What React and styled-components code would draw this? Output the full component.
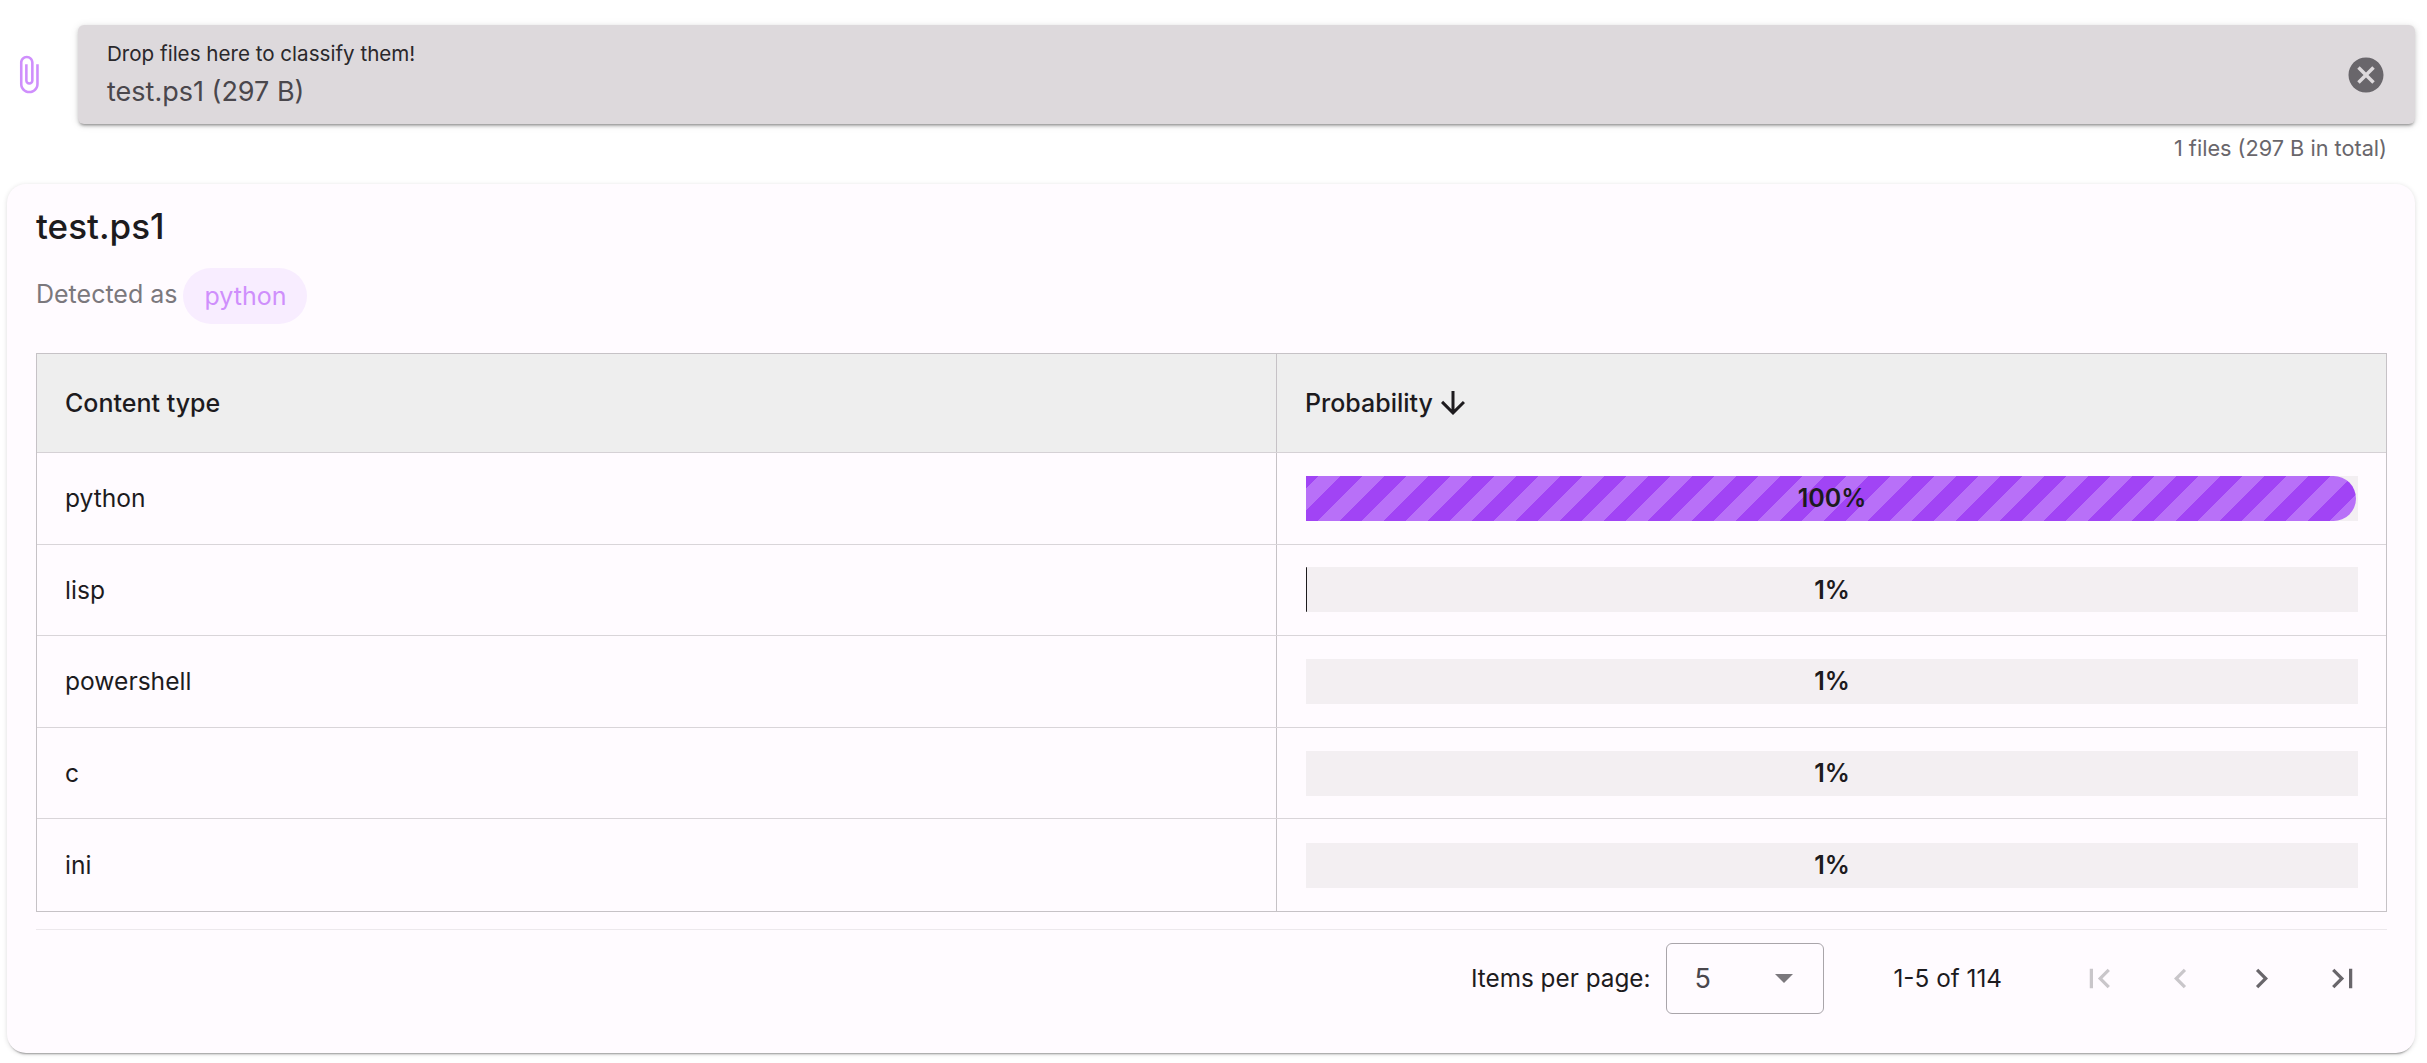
import styled, { createGlobalStyle } from 'styled-components';

const rows = [
  { name: 'python', value: 100, fill: 99.8 },
  { name: 'lisp', value: 1, fill: 0.1 },
  { name: 'powershell', value: 1, fill: 0 },
  { name: 'c', value: 1, fill: 0 },
  { name: 'ini', value: 1, fill: 0 },
];

const Icon = ({ d, size = 39, color = 'currentColor' }) => (
  <svg width={size} height={size} viewBox="0 0 24 24" fill={color} style={{ display: 'block' }}>
    <path d={d} />
  </svg>
);

const paths = {
  clip: 'M16.5 6v11.5c0 2.21-1.79 4-4 4s-4-1.79-4-4V5c0-1.38 1.12-2.5 2.5-2.5s2.5 1.12 2.5 2.5v10.5c0 .55-.45 1-1 1s-1-.45-1-1V6H10v9.5c0 1.38 1.12 2.5 2.5 2.5s2.5-1.12 2.5-2.5V5c0-2.21-1.79-4-4-4S7 2.79 7 5v12.5c0 3.04 2.46 5.5 5.5 5.5s5.5-2.46 5.5-5.5V6h-1.5z',
  cancel: 'M12 2C6.47 2 2 6.47 2 12s4.47 10 10 10 10-4.47 10-10S17.53 2 12 2zm5 13.59L15.59 17 12 13.41 8.41 17 7 15.59 10.59 12 7 8.41 8.41 7 12 10.59 15.59 7 17 8.41 13.41 12 17 15.59z',
  down: 'M20 12l-1.41-1.41L13 16.17V4h-2v12.17l-5.58-5.59L4 12l8 8 8-8z',
  first: 'M18.41 16.59L13.82 12l4.59-4.59L17 6l-6 6 6 6zM6 6h2v12H6z',
  prev: 'M15.41 7.41L14 6l-6 6 6 6 1.41-1.41L10.83 12z',
  next: 'M10 6L8.59 7.41 13.17 12l-4.58 4.59L10 18l6-6z',
  last: 'M5.59 7.41L10.18 12l-4.59 4.59L7 18l6-6-6-6zM16 6h2v12h-2z',
};

const App = () => (
  <>
    <GlobalStyle />
    <Page>
      <UploadRow>
        <ClipSlot>
          <Icon d={paths.clip} size={41} color="#cf8ffc" />
        </ClipSlot>
        <DropZone>
          <DropText>
            <DropLabel>Drop files here to classify them!</DropLabel>
            <FileName>test.ps1 (297 B)</FileName>
          </DropText>
          <Icon d={paths.cancel} size={42} color="#69666b" />
        </DropZone>
      </UploadRow>
      <TotalHint>1 files (297 B in total)</TotalHint>

      <Card>
        <Title>test.ps1</Title>
        <DetectedRow>
          Detected as <Chip>python</Chip>
        </DetectedRow>

        <Table>
          <HeadRow>
            <HeadCell>Content type</HeadCell>
            <HeadCell $divider>
              Probability
              <Icon d={paths.down} size={36} color="#1d1b1e" />
            </HeadCell>
          </HeadRow>
          {rows.map((row) => (
            <BodyRow key={row.name}>
              <BodyCell>{row.name}</BodyCell>
              <BodyCell $divider>
                <Track>
                  <Fill $full={row.value === 100} style={{ width: `${row.fill}%` }} />
                  <Percent>{row.value}%</Percent>
                </Track>
              </BodyCell>
            </BodyRow>
          ))}
        </Table>

        <Paginator>
          <PagerLabel>Items per page:</PagerLabel>
          <Select>
            5
            <Caret />
          </Select>
          <RangeLabel>1-5 of 114</RangeLabel>
          <PagerButton $disabled><Icon d={paths.first} /></PagerButton>
          <PagerButton $disabled><Icon d={paths.prev} /></PagerButton>
          <PagerButton><Icon d={paths.next} /></PagerButton>
          <PagerButton><Icon d={paths.last} /></PagerButton>
        </Paginator>
      </Card>
    </Page>
  </>
);

const GlobalStyle = createGlobalStyle`
  html, body {
    margin: 0;
    padding: 0;
    background: #ffffff;
    overflow: hidden;
  }
  body {
    font-family: 'Inter', 'Roboto', sans-serif;
    color: #1d1b1e;
  }
`;

const Page = styled.div`
  width: 2427px;
  height: 1063px;
  box-sizing: border-box;
  padding: 25px 12px 0 7px;
`;

const UploadRow = styled.div`
  display: flex;
  align-items: center;
`;

const ClipSlot = styled.div`
  width: 71px;
  box-sizing: border-box;
  padding-left: 1px;
  flex: none;
  margin-bottom: 1px;
`;

const DropZone = styled.div`
  flex: 1;
  height: 99px;
  box-sizing: border-box;
  padding: 0 28px 0 29px;
  display: flex;
  align-items: center;
  justify-content: space-between;
  background: #ddd9dc;
  border-radius: 6px;
  box-shadow: 0 3px 3px -2px rgba(0, 0, 0, 0.35), 0 2px 4px rgba(0, 0, 0, 0.14), 0 1px 8px rgba(0, 0, 0, 0.1);
`;

const DropText = styled.div`
  display: flex;
  flex-direction: column;
  gap: 9px;
`;

const DropLabel = styled.div`
  font-size: 20.6px;
  line-height: 26px;
  color: #2a282b;
`;

const FileName = styled.div`
  font-size: 27px;
  line-height: 32px;
  color: #4a474c;
`;

const TotalHint = styled.div`
  height: 60px;
  padding: 11px 28px 0 0;
  box-sizing: border-box;
  text-align: right;
  font-size: 21.7px;
  line-height: 26px;
  color: #69666b;
`;

const Card = styled.div`
  height: 869px;
  box-sizing: border-box;
  padding: 0 28px 0 29px;
  background: #fffbff;
  border-radius: 19px;
  box-shadow: 0 3px 2px -2px rgba(0, 0, 0, 0.35), 0 1px 5px rgba(0, 0, 0, 0.14);
`;

const Title = styled.div`
  height: 84px;
  font-size: 35px;
  line-height: 84px;
  font-weight: 500;
  color: #1d1b1e;
`;

const DetectedRow = styled.div`
  height: 85px;
  display: flex;
  align-items: flex-start;
  gap: 5px;
  font-size: 25px;
  line-height: 52px;
  color: #7b787d;
`;

const Chip = styled.span`
  height: 56px;
  padding: 0 21px 0 22px;
  display: inline-flex;
  align-items: center;
  background: #f8edff;
  border-radius: 28px;
  color: #cf8ffc;
`;

const Table = styled.div`
  border: 1px solid #c6c2c6;
`;

const HeadRow = styled.div`
  display: grid;
  grid-template-columns: 1239px 1fr;
  height: 99px;
  box-sizing: border-box;
  background: #eeeeee;
  border-bottom: 1px solid #d5d1d5;
`;

const HeadCell = styled.div`
  display: flex;
  align-items: center;
  gap: 2px;
  padding-left: 28px;
  font-size: 25px;
  font-weight: 500;
  color: #1d1b1e;
  border-left: ${(p) => (p.$divider ? '1px solid #c6c2c6' : 'none')};
`;

const BodyRow = styled.div`
  display: grid;
  grid-template-columns: 1239px 1fr;
  height: 91.6px;
  box-sizing: border-box;
  border-bottom: 1px solid #d9d5d9;

  &:last-child {
    border-bottom: none;
  }
`;

const BodyCell = styled.div`
  display: flex;
  align-items: center;
  padding: 0 28px 0 ${(p) => (p.$divider ? '29px' : '28px')};
  font-size: 24.6px;
  color: #1d1b1e;
  border-left: ${(p) => (p.$divider ? '1px solid #c6c2c6' : 'none')};
`;

const Track = styled.div`
  position: relative;
  flex: 1;
  height: 45px;
  background: #f3eff2;
`;

const Fill = styled.div`
  height: 100%;
  border-radius: 0 23px 23px 0;
  background-color: ${(p) => (p.$full ? '#a144f5' : '#1d1b1e')};
  background-image: ${(p) =>
    p.$full
      ? 'repeating-linear-gradient(135deg, #a144f5 0, #a144f5 9px, #b870f8 9px, #b870f8 24.56px, #a144f5 24.56px, #a144f5 31.11px)'
      : 'none'};
`;

const Percent = styled.div`
  position: absolute;
  inset: 0;
  display: flex;
  align-items: center;
  justify-content: center;
  font-size: 25px;
  font-weight: 600;
  color: #1d1b1e;
`;

const Paginator = styled.div`
  margin-top: 17px;
  padding: 13px 4px 0 0;
  display: flex;
  align-items: flex-start;
  justify-content: flex-end;
  border-top: 1px solid #ece8ec;
  font-size: 24.3px;
  color: #1d1b1e;
`;

const PagerLabel = styled.div`
  line-height: 71px;
  margin-right: 16px;
`;

const Select = styled.div`
  width: 158px;
  height: 71px;
  box-sizing: border-box;
  padding: 0 30px 0 27px;
  display: flex;
  align-items: center;
  justify-content: space-between;
  border: 1px solid #a9a5aa;
  border-radius: 6px;
  font-size: 27px;
  color: #4a474c;
`;

const Caret = styled.span`
  width: 0;
  height: 0;
  border-left: 9px solid transparent;
  border-right: 9px solid transparent;
  border-top: 9px solid #7b787d;
`;

const RangeLabel = styled.div`
  line-height: 71px;
  margin: 0 57px 0 69px;
`;

const PagerButton = styled.div`
  width: 81px;
  height: 71px;
  display: flex;
  align-items: center;
  justify-content: center;
  color: ${(p) => (p.$disabled ? '#c9c6ca' : '#69666b')};
`;

export default App;
